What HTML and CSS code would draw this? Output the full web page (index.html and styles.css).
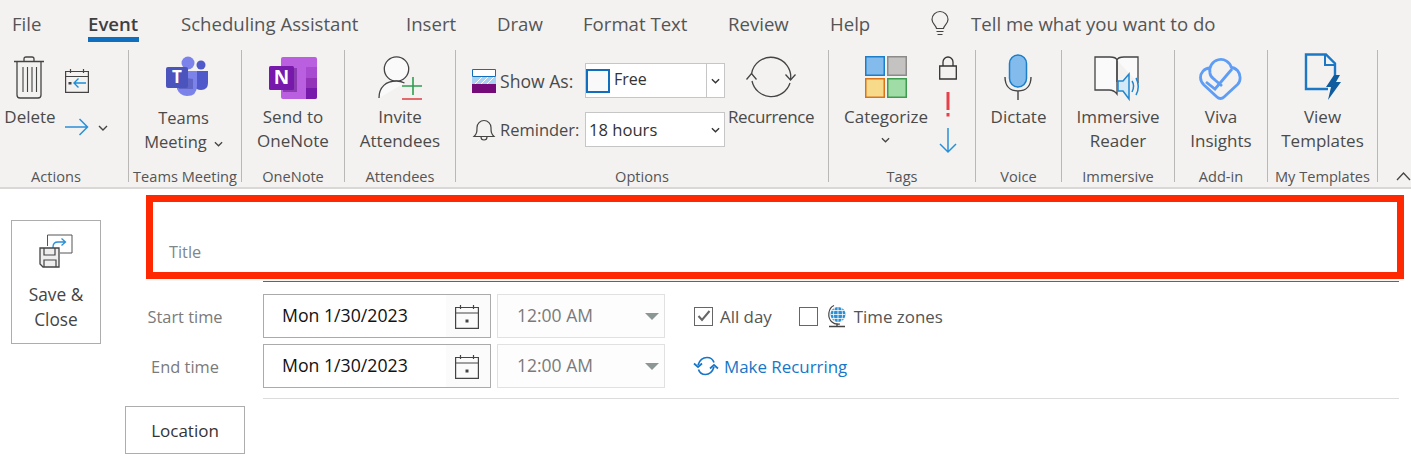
FILE: index.html
```html
<!DOCTYPE html>
<html lang="en">
<head>
<meta charset="utf-8">
<title>Event</title>
<link rel="stylesheet" href="styles.css">
</head>
<body>
<header class="ribbon-wrap">
  <nav class="tabs">
    <span class="tab t-file">File</span>
    <span class="tab t-event">Event</span>
    <span class="tab t-sched">Scheduling Assistant</span>
    <span class="tab t-insert">Insert</span>
    <span class="tab t-draw">Draw</span>
    <span class="tab t-format">Format Text</span>
    <span class="tab t-review">Review</span>
    <span class="tab t-help">Help</span>
    <svg class="bulb" width="18" height="25" viewBox="0 0 18 25" fill="none" stroke="#444" stroke-width="1.2"><path d="M5.5 17.5C5 14 1 12.500 1 8.500a8 8 0 0 1 16 0c0 4-4 5.500-4.500 9z"/><path d="M5.500 20.500h7M6.500 23.500h5"/></svg>
    <span class="tell">Tell me what you want to do</span>
  </nav>
  <section class="ribbon">
    <div class="group g-actions">
      <div class="content actions">
        <div class="big delete">
          <svg class="i-trash" width="32" height="43" viewBox="0 0 32 43" fill="none" stroke="#444" stroke-width="1.300"><path d="M1 5.500h30M11 5.500V3q0-2 2-2h6q2 0 2 2v2.500"/><path d="M4 5.500V39q0 3 3 3h18q3 0 3-3V5.500"/><path d="M10 11v25M14.500 11v25M19 11v25M23.500 11v25" stroke-width="1.100"/></svg>
          <span class="lbl">Delete</span>
        </div>
        <div class="minis">
          <svg class="i-cal" width="24" height="25" viewBox="0 0 24 25" fill="none"><path d="M.6 3.500h22.800v20.900H.6z" stroke="#444" stroke-width="1.200"/><path d="M.6 8.500h22.800M5.500 1v4M18.500 1v4" stroke="#444" stroke-width="1.200"/><path d="M21 15H9M13.500 10.500 9 15l4.500 4.500" stroke="#1b8fd8" stroke-width="1.400"/><path d="M3.500 14h3v2.500h-3z" fill="#444"/></svg>
          <div class="fwd">
            <svg width="24" height="18" viewBox="0 0 24 18" fill="none" stroke="#2b8fd6" stroke-width="1.500"><path d="M0 9h22.500M14.500 1l8 8-8 8"/></svg>
            <svg class="chev" width="10" height="6" viewBox="0 0 10 6" fill="none" stroke="#444" stroke-width="1.400"><path d="M1 1l4 4 4-4"/></svg>
          </div>
        </div>
      </div>
      <div class="glabel gl-actions">Actions</div>
    </div>

    <div class="group g-teams">
      <div class="content">
        <div class="big teams">
          <svg width="44" height="41" viewBox="0 0 44 41"><circle cx="23" cy="7" r="6.500" fill="#7b83eb"/><circle cx="36" cy="9" r="4.500" fill="#5059c9"/><path d="M29 15h14v12q0 7-7 7-5 0-7-4z" fill="#5059c9"/><path d="M12 15h20v15q0 10-10 10-7 0-10-7z" fill="#7b83eb"/><path d="M14 33h14q0-4 0-10l-14-2z" fill="#4a4fa8" opacity=".55"/><rect x="1" y="11" width="22" height="21" rx="2" fill="#4b53bc"/><text x="12" y="27" class="svgt">T</text></svg>
          <span class="lbl">Teams</span>
          <span class="lbl">Meeting <svg class="chev2" width="9" height="6" viewBox="0 0 10 6" fill="none" stroke="#444" stroke-width="1.400"><path d="M1 1l4 4 4-4"/></svg></span>
        </div>
      </div>
      <div class="glabel">Teams Meeting</div>
    </div>

    <div class="group g-onenote">
      <div class="content">
        <div class="big">
          <svg width="48" height="42" viewBox="0 0 48 42"><rect x="12" width="36" height="42" rx="2" fill="#ba5fe0"/><path d="M37 10h11v11H37z" fill="#a94bd0"/><path d="M37 21h11v10H37z" fill="#9333b8"/><path d="M37 31h11v9q0 2-2 2h-9z" fill="#7719aa"/><path d="M14 11h14v24H14z" fill="#5c1a82" opacity=".5"/><rect y="9" width="25" height="24" rx="1.500" fill="#7719aa"/><text x="12.500" y="27" class="svgo">N</text></svg>
          <span class="lbl">Send to</span>
          <span class="lbl">OneNote</span>
        </div>
      </div>
      <div class="glabel">OneNote</div>
    </div>

    <div class="group g-attend">
      <div class="content">
        <div class="big">
          <svg width="44" height="44" viewBox="0 0 44 44" fill="none"><circle cx="18.500" cy="13" r="12.200" fill="#fafafa" stroke="#444" stroke-width="1.300"/><path d="M1 42c0-11 7-17 17.500-17 4 0 6 1 8 2" fill="#fafafa" stroke="#444" stroke-width="1.300"/><path d="M35 21v18M24 30h20" stroke="#2e9e4f" stroke-width="1.600"/><path d="M24 43h20" stroke="#e0474c" stroke-width="1.600"/></svg>
          <span class="lbl">Invite</span>
          <span class="lbl">Attendees</span>
        </div>
      </div>
      <div class="glabel">Attendees</div>
    </div>

    <div class="group g-options">
      <div class="content options">
        <div class="opt-rows">
          <div class="opt-row r-show">
            <svg width="24" height="24" viewBox="0 0 24 24"><path d="M.5.500h23v7H.5z" fill="#fff" stroke="#106ebe"/><path d="M0 8h24v7H0z" fill="#a9d1f2"/><path d="M3 15l7-7M9 15l7-7M15 15l7-7" stroke="#fff"/><path d="M0 15h24v9H0z" fill="#750b78"/></svg>
            <span class="opt-label">Show As:</span>
            <div class="combo">
              <span class="swatch"></span><span class="combo-text">Free</span>
              <span class="combo-btn sep"><svg width="9" height="6" viewBox="0 0 10 6" fill="none" stroke="#333" stroke-width="1.500"><path d="M1 1l4 4 4-4"/></svg></span>
            </div>
          </div>
          <div class="opt-row r-rem">
            <svg width="22" height="25" viewBox="0 0 22 25" fill="none" stroke="#444" stroke-width="1.200"><path d="M1 19.500c3-3 3-5 3-9a7 7 0 0 1 14 0c0 4 0 6 3 9z"/><path d="M8 20c0 4 6 4 6 0"/></svg>
            <span class="opt-label">Reminder:</span>
            <div class="combo">
              <span class="combo-text hours">18 hours</span>
              <span class="combo-btn"><svg width="9" height="6" viewBox="0 0 10 6" fill="none" stroke="#333" stroke-width="1.500"><path d="M1 1l4 4 4-4"/></svg></span>
            </div>
          </div>
        </div>
        <div class="big recur">
          <svg width="48" height="42" viewBox="0 0 48 42" fill="none" stroke="#444" stroke-width="1.300"><path d="M4.500 18A19.700 19.700 0 0 1 43.500 24"/><path d="M43 27A19.700 19.700 0 0 1 5 25"/><path d="M38.500 18.500l5 5.500 5-5.500M-.5 23.500l5-6 5 6"/></svg>
          <span class="lbl">Recurrence</span>
        </div>
      </div>
      <div class="glabel">Options</div>
    </div>

    <div class="group g-tags">
      <div class="content tags">
        <div class="big cat">
          <svg width="42" height="42" viewBox="0 0 42 42"><rect x=".75" y=".75" width="18.500" height="18.500" fill="#83bcec" stroke="#1c7ec9" stroke-width="1.500"/><rect x="22.750" y=".75" width="18.500" height="18.500" fill="#c4c3c2" stroke="#8c8b8a" stroke-width="1.500"/><rect x=".75" y="22.750" width="18.500" height="18.500" fill="#f8da8b" stroke="#d9741a" stroke-width="1.500"/><rect x="22.750" y="22.750" width="18.500" height="18.500" fill="#a0dca6" stroke="#3e9c51" stroke-width="1.500"/></svg>
          <span class="lbl">Categorize</span>
          <svg class="chev3" width="9" height="6" viewBox="0 0 10 6" fill="none" stroke="#444" stroke-width="1.400"><path d="M1 1l4 4 4-4"/></svg>
        </div>
        <div class="tag-icons">
          <svg width="18" height="24" viewBox="0 0 18 24" fill="none" stroke="#333" stroke-width="1.300"><path d="M.7 10h16.600v13H.7z"/><path d="M4 10V6a5 5 0 0 1 10 0v4"/></svg>
          <svg class="bang" width="4" height="25" viewBox="0 0 4 25"><path d="M.5 0h3v18h-3z" fill="#e8404a"/><path d="M.5 21h3v3.500h-3z" fill="#e8404a"/></svg>
          <svg width="18" height="25" viewBox="0 0 18 25" fill="none" stroke="#2b8fd6" stroke-width="1.500"><path d="M9 0v23.500M1 16l8 8 8-8"/></svg>
        </div>
      </div>
      <div class="glabel">Tags</div>
    </div>

    <div class="group g-voice">
      <div class="content">
        <div class="big mic">
          <svg width="28" height="46" viewBox="0 0 28 46" fill="none"><rect x="5.500" y="1" width="17" height="32" rx="8.500" fill="#83bcec" stroke="#1c7ec9" stroke-width="1.500"/><path d="M1 23c0 9 5 14 13 14s13-5 13-14M14 37v9" stroke="#444" stroke-width="1.400"/></svg>
          <span class="lbl">Dictate</span>
        </div>
      </div>
      <div class="glabel">Voice</div>
    </div>

    <div class="group g-imm">
      <div class="content">
        <div class="big">
          <svg width="48" height="44" viewBox="0 0 48 44" fill="none"><path d="M1 1h15q6 0 7 3v34q-3-4-8-4H1z" fill="#fafafa" stroke="#444" stroke-width="1.300"/><path d="M23 4q1-3 7-3h14v26" fill="#fafafa" stroke="#444" stroke-width="1.300"/><path d="M23 4v22" stroke="#444" stroke-width="1.300"/><path d="M24 26h5l6-7v25l-6-8h-5z" fill="#d5e8f7" stroke="#1f86d0" stroke-width="1.500" transform="translate(0 -1)"/><path d="M38 25c2 3 2 7 0 11M42 22c3 5 3 12 0 17" stroke="#1f86d0" stroke-width="1.500"/></svg>
          <span class="lbl">Immersive</span>
          <span class="lbl">Reader</span>
        </div>
      </div>
      <div class="glabel">Immersive</div>
    </div>

    <div class="group g-addin">
      <div class="content">
        <div class="big">
          <svg width="44" height="44" viewBox="0 0 44 44" fill="none" stroke="#5f9df5" stroke-width="2.800"><path d="M11 12C5 12 1.500 17 1.500 21.500 1.500 25 3 27 5 29L18 41c2 2 5 2 7 0l13.500-12.500c3.500-3.500 3.500-10 0-14C36 12 34 11.500 32 11.500"/><path d="M11 17A11 11 0 1 1 32.500 12"/><path d="M11 17c0 4 3 5 5 7l7 6"/><path d="M7 26l9 7L33 13"/></svg>
          <span class="lbl">Viva</span>
          <span class="lbl">Insights</span>
        </div>
      </div>
      <div class="glabel">Add-in</div>
    </div>

    <div class="group g-tmpl">
      <div class="content">
        <div class="big">
          <svg width="38" height="48" viewBox="0 0 38 48" fill="none"><path d="M24 36H2V1.500h20l9 9v12" stroke="#1c78c5" stroke-width="2.400"/><path d="M21 2v10h10" stroke="#1c78c5" stroke-width="2"/><path d="M30 22h6l-4 7h5L24 47l3-13h-5z" fill="#0f5d9e"/></svg>
          <span class="lbl">View</span>
          <span class="lbl">Templates</span>
        </div>
      </div>
      <div class="glabel">My Templates</div>
    </div>

    <svg class="collapse" width="15" height="9" viewBox="0 0 15 9" fill="none" stroke="#444" stroke-width="1.300"><path d="M1 8l6.500-7 6.500 7"/></svg>
  </section>
</header>

<main class="form">
  <aside class="save-col">
    <button class="save">
      <svg width="34" height="34" viewBox="0 0 34 34" fill="none"><path d="M8.500 1H33v18H21" stroke="#555" stroke-width="1"/><path d="M8.500 1v11" stroke="#555"/><path d="M14 14v-1q0-5 5-5h7M22.500 4.500 26.500 8l-4 3.500" stroke="#2b8fd6" stroke-width="1.300"/><path d="M1 14h19v19H4l-3-3z" fill="#eee" stroke="#444" stroke-width="1.300"/><path d="M5 14v7h11v-7M5 33v-7h12v7" stroke="#444" stroke-width="1.200"/></svg>
      <span>Save &amp;</span>
      <span>Close</span>
    </button>
  </aside>
  <div class="fields">
    <div class="title-box"><span>Title</span></div>
    <div class="title-rule"></div>
    <div class="time-row">
      <span class="time-label">Start time</span>
      <div class="date"><span>Mon 1/30/2023</span>
        <span class="cal-btn"><svg width="24" height="25" viewBox="0 0 24 25" fill="none" stroke="#444" stroke-width="1.200"><path d="M.6 3.500h22.800v20.900H.6zM.6 9h22.800M5.500 1v4M18.500 1v4"/><path d="M10.500 15.500h3v3h-3z" fill="#444" stroke="none"/></svg></span>
      </div>
      <div class="time"><span>12:00 AM</span><i class="tri"></i></div>
      <div class="opts">
        <span class="check on"><svg width="14" height="12" viewBox="0 0 14 12" fill="none" stroke="#666" stroke-width="2"><path d="M1.500 6l3.500 4 7.500-9"/></svg></span>
        <span class="opt">All day</span>
        <span class="check second"></span>
        <svg class="globe" width="20" height="24" viewBox="0 0 20 24" fill="none"><path d="M7 1.500C1 4 0 14 5 18c2 2 5 2.500 8 2" stroke="#444" stroke-width="1.200"/><circle cx="11" cy="10.500" r="7.500" fill="#2b8fd6"/><path d="M3.500 10.500h15M11 3v15M5 6.500h12M5 14.500h12M8 3.500c-2 4-2 10 0 14M14 3.500c2 4 2 10 0 14" stroke="#fff" stroke-width=".8"/><path d="M2 22.500h16M10 19.500v3" stroke="#444" stroke-width="1.300"/></svg>
        <span class="opt">Time zones</span>
      </div>
    </div>
    <div class="time-row">
      <span class="time-label">End time</span>
      <div class="date"><span>Mon 1/30/2023</span>
        <span class="cal-btn"><svg width="24" height="25" viewBox="0 0 24 25" fill="none" stroke="#444" stroke-width="1.200"><path d="M.6 3.500h22.800v20.900H.6zM.6 9h22.800M5.500 1v4M18.500 1v4"/><path d="M10.500 15.500h3v3h-3z" fill="#444" stroke="none"/></svg></span>
      </div>
      <div class="time"><span>12:00 AM</span><i class="tri"></i></div>
      <div class="opts">
        <svg width="24" height="20" viewBox="0 0 24 20" fill="none" stroke="#1776c8" stroke-width="1.700"><path d="M4 9C6 3 10 1.500 13 1.500c3 0 6 2 7 5M20 11c-2 6-5 7.500-8.500 7.500-3 0-6-2-7-5"/><path d="M0 7.500l4 3.500 4-3.500M16 12.500l4-3.500 4 3.500"/></svg>
        <span class="link">Make Recurring</span>
      </div>
    </div>
    <div class="rule2"></div>
    <button class="location">Location</button>
  </div>
</main>
</body>
</html>
```
FILE: styles.css
```css
* { box-sizing: border-box; }
html, body { margin: 0; padding: 0; }
body {
  width: 1411px;
  height: 459px;
  overflow: hidden;
  background: #fff;
  font-family: "Open Sans", "Noto Sans", sans-serif;
  color: #444;
}
svg { display: block; flex: none; overflow: visible; }

.ribbon-wrap {
  background: #f3f2f1;
  height: 189px;
  border-bottom: 2px solid #d9d8d7;
}
.tabs {
  display: flex;
  height: 50px;
  padding-left: 12px;
  font-size: 18.600px;
  color: #555;
  position: relative;
}
.tab { line-height: 47px; height: 42px; white-space: nowrap; }
.t-file { width: 76px; }
.t-event { width: 93px; font-weight: 600; color: #3f3f3f; position: relative; }
.t-event::after {
  content: "";
  position: absolute;
  left: 0;
  width: 51px;
  top: 37px;
  height: 5px;
  background: #106ebe;
}
.t-sched { width: 225px; }
.t-insert { width: 91px; }
.t-draw { width: 86px; }
.t-format { width: 145px; }
.t-review { width: 102px; }
.t-help { width: 101px; }
.bulb { margin-top: 11px; margin-right: 22px; }
.tell { line-height: 47px; height: 42px; }

.ribbon { display: flex; height: 137px; position: relative; }
.group {
  display: flex;
  flex-direction: column;
  height: 132px;
  border-right: 1px solid #b9b8b7;
}
.g-actions { width: 129px; }
.g-teams { width: 113px; }
.g-onenote { width: 103px; }
.g-attend { width: 111px; }
.g-options { width: 373px; }
.g-tags { width: 147px; }
.g-voice { width: 86px; }
.g-imm { width: 113px; }
.g-addin { width: 93px; }
.g-tmpl { width: 110px; }

.content { flex: 1; display: flex; justify-content: center; padding-top: 6px; min-height: 0; }
.glabel {
  height: 16px;
  line-height: 20px;
  font-size: 14.600px;
  text-align: center;
  white-space: nowrap;
  color: #555;
}
.gl-actions { padding-right: 16px; }
.big {
  display: flex;
  flex-direction: column;
  align-items: center;
  font-size: 17px;
  color: #4a4a4a;
}
.big > svg:first-child { height: 44px; margin-bottom: 5px; }
.lbl { display: flex; align-items: center; gap: 5px; line-height: 24px; white-space: nowrap; }
.chev2 { margin-top: 3px; }
.chev3 { margin-top: 8px; }

.actions { justify-content: flex-start; padding-left: 5px; }
.delete { width: 50px; }
.delete > svg:first-child { height: 43px; margin-bottom: 6px; margin-left: -2px; }
.minis { padding: 12px 0 0 10px; }
.fwd { display: flex; align-items: center; gap: 9px; margin-top: 25px; }
.chev { margin-top: 2px; }

.teams { font-size: 16.500px; margin-left: -3px; }
.teams .lbl { gap: 7px; }
.teams > svg:first-child { height: 41px; margin-bottom: 9px; margin-left: 6px; }
.svgt { font: 700 17px "Open Sans", sans-serif; fill: #fff; text-anchor: middle; }
.svgo { font: 700 19px "Open Sans", sans-serif; fill: #fff; text-anchor: middle; }

.options { justify-content: flex-start; padding-left: 16px; }
.opt-rows { display: flex; flex-direction: column; gap: 14px; padding-top: 7px; }
.opt-row { display: flex; align-items: center; height: 35px; font-size: 17.600px; }
.opt-label { white-space: nowrap; color: #4a4a4a; }
.r-show .opt-label { width: 89px; padding-left: 4px; }
.r-rem { font-size: 16.500px; }
.r-rem svg { margin-left: 1px; }
.r-rem .opt-label { width: 90px; padding-left: 5px; }
.combo {
  width: 140px;
  height: 35px;
  background: #fff;
  border: 1px solid #c6c6c6;
  display: flex;
  align-items: center;
  font-size: 16px;
  color: #333;
}
.swatch { width: 24px; height: 24px; background: #f9f9f9; border: 2px solid #106ebe; }
.combo-text { flex: 1; padding-left: 4px; line-height: 31px; height: 33px; }
.hours { padding-left: 3px; font-size: 16.600px; line-height: 34px; }
.combo-btn { width: 18px; height: 33px; display: flex; align-items: center; justify-content: center; }
.sep { border-left: 1px solid #c6c6c6; }
.recur { margin-left: 3px; letter-spacing: -0.400px; }
.recur > svg:first-child { height: 42px; margin-bottom: 7px; }

.tags { justify-content: flex-start; padding-left: 15px; }
.cat > svg:first-child { height: 42px; margin-bottom: 7px; }
.tag-icons { display: flex; flex-direction: column; align-items: center; gap: 11px; margin-left: 11px; }
.bang { margin-top: 1px; }

.mic > svg:first-child { height: 46px; margin-bottom: 5px; margin-top: -2px; }
.g-tmpl .big > svg:first-child { height: 48px; margin-top: -3px; margin-bottom: 4px; }

.collapse { position: absolute; left: 1396px; top: 122px; }

/* form */
.form { display: flex; height: 270px; padding-top: 6px; }
.save-col { width: 125px; padding: 25px 0 0 11px; flex: none; }
.save {
  width: 90px;
  height: 124px;
  background: #fff;
  border: 1px solid #adadad;
  font: 17.300px "Open Sans", "Noto Sans", sans-serif;
  color: #444;
  display: flex;
  flex-direction: column;
  align-items: center;
  padding: 13px 0 0;
  line-height: 25px;
}
.save svg { margin-bottom: 14px; }

.fields { width: 1274px; }
.title-box {
  margin-left: 21px;
  margin-right: -5px;
  height: 84px;
  border: 7px solid #ff2800;
  font-size: 16.300px;
  color: #80878c;
  padding: 38px 0 0 16px;
  line-height: 24px;
}
.title-rule { margin: 2px 0 12px 138px; height: 1px; background: #2a72b5; }
.time-row { display: flex; align-items: center; height: 44px; margin-bottom: 6px; }
.time-label { width: 120px; margin-right: 18px; text-align: center; font-size: 16.400px; color: #7a7a7a; }
.date {
  width: 228px;
  height: 44px;
  border: 1px solid #ababab;
  display: flex;
  align-items: center;
  justify-content: space-between;
  padding-left: 18px;
  font-size: 17.700px;
  color: #111;
}
.date > span:first-child { margin-top: -3px; }
.cal-btn { width: 44px; height: 42px; background: #fbfbfb; display: flex; align-items: center; justify-content: flex-start; padding-left: 9px; }
.time {
  width: 168px;
  height: 44px;
  margin-left: 6px;
  border: 1px solid #e1e1e1;
  background: #fdfdfd;
  display: flex;
  align-items: center;
  justify-content: space-between;
  padding: 0 5px 0 19px;
  font-size: 17.500px;
  color: #7a7a7a;
}
.time > span { margin-top: -3px; }
.tri {
  width: 0;
  height: 0;
  border-left: 7px solid transparent;
  border-right: 7px solid transparent;
  border-top: 7px solid #8c9695;
}
.opts { display: flex; align-items: center; margin-left: 29px; font-size: 16.900px; color: #555; }
.check {
  width: 19px;
  height: 19px;
  border: 1px solid #666;
  display: flex;
  align-items: center;
  justify-content: center;
  background: #fff;
}
.opt { margin-left: 7px; white-space: nowrap; }
.second { margin-left: 27px; }
.globe { margin-left: 9px; margin-right: 0; }
.link { margin-left: 6px; color: #1776c8; }
.rule2 { margin: 10px 0 7px 138px; height: 1px; background: #dcdcdc; }
.location {
  display: block;
  width: 120px;
  height: 48px;
  background: #fff;
  border: 1px solid #adadad;
  font: 17px "Open Sans", "Noto Sans", sans-serif;
  color: #333;
  padding: 0;
}
```
